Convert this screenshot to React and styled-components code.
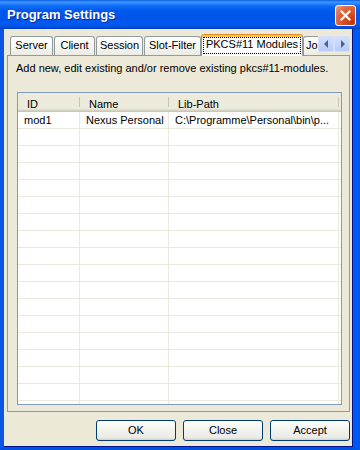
import React from 'react';
import styled, { createGlobalStyle, css } from 'styled-components';

const Global = createGlobalStyle`
  html, body { margin: 0; padding: 0; background: #ece9d8; }
  body { font-family: "Liberation Sans", Arial, sans-serif; font-size: 11px; color: #000; }
  * { box-sizing: border-box; }
`;

const Window = styled.div`
  width: 360px;
  height: 450px;
  display: flex;
  flex-direction: column;
  overflow: hidden;
`;

const TitleBar = styled.div`
  flex: none;
  height: 29px;
  display: flex;
  align-items: center;
  justify-content: space-between;
  padding: 0 4px 0 7px;
  background: linear-gradient(180deg, #0b5ddc 0%, #3d95ff 7%, #2a86ff 12%, #0f6cf6 20%, #0059ee 36%, #0055e9 62%, #005af2 82%, #0052e0 93%, #003cbc 100%);
`;

const Title = styled.div`
  color: #fff;
  font-weight: bold;
  font-size: 13px;
  line-height: 16px;
  margin-top: 1px;
  text-shadow: 1px 1px #0a2a9a;
`;

const CloseButton = styled.div`
  width: 21px;
  height: 21px;
  border: 1px solid #fff;
  border-radius: 3px;
  background: radial-gradient(circle at 85% 85%, #c2350c 0%, #d9552a 45%, #e37150 75%, #f0a58c 100%);
  display: flex;
  align-items: center;
  justify-content: center;
  margin-top: 1px;
`;

const Frame = styled.div`
  flex: 1;
  display: flex;
  flex-direction: column;
  border-left: 4px solid #0a56e6;
  border-right: 7px solid #0058ee;
  border-bottom: 3px solid #0052e2;
  min-height: 0;
`;

const Content = styled.div`
  flex: 1;
  display: flex;
  flex-direction: column;
  background: #ece9d8;
  border-right: 1px solid #00138c;
  border-bottom: 1px solid #00138c;
  padding: 5px 0 4px 0;
  min-height: 0;
`;

const Strip = styled.div`
  flex: none;
  display: flex;
  height: 22px;
  margin: 0 2px -1px 3px;
  padding-left: 3px;
  position: relative;
  z-index: 1;
`;

const TabViewport = styled.div`
  flex: 1;
  min-width: 0;
  display: flex;
  align-items: flex-start;
  overflow: hidden;
`;

const Tab = styled.div`
  flex: none;
  width: ${(p) => p.$w}px;
  margin-left: ${(p) => p.$gap}px;
  border: 1px solid #919b9c;
  border-bottom: none;
  border-radius: 3px 3px 0 0;
  white-space: nowrap;
  text-align: center;
  line-height: 13px;
  ${(p) =>
    p.$sel
      ? css`
          height: 22px;
          margin-top: 0;
          border-top-color: #e68b2c;
          background: #fcfcfe;
          box-shadow: inset 0 2px #ffc73c;
          padding: 2px 1px 0 1px;
        `
      : css`
          height: 19px;
          margin-top: 2px;
          background: linear-gradient(180deg, #ffffff 0%, #f7f7f4 50%, #ecebe5 100%);
          padding: 2px 0 0 0;
        `}
  ${(p) =>
    p.$clipped &&
    css`
      border-right: none;
      border-top-right-radius: 0;
      text-align: left;
      padding-left: 2px;
    `}
`;

const FocusRect = styled.div`
  height: 17px;
  border: 1px dotted #000;
  line-height: 13px;
  padding-top: 0;
`;

const Spinner = styled.div`
  flex: none;
  display: flex;
  margin-top: 2px;
  height: 16px;
`;

const SpinButton = styled.div`
  width: 16px;
  height: 16px;
  display: flex;
  align-items: center;
  justify-content: center;
  background: linear-gradient(180deg, #d3e0fc 0%, #c4d5fb 50%, #b7cbf6 100%);
  border: 1px solid #d2defb;
  border-radius: 2px;
`;

const Panel = styled.div`
  flex: none;
  height: 357px;
  display: flex;
  flex-direction: column;
  margin: 0 2px 0 3px;
  border: 1px solid #919b9c;
  background: #ece9d8;
  padding: 6px 7px 6px 8px;
`;

const Description = styled.div`
  line-height: 13px;
  white-space: nowrap;
  flex: none;
`;

const List = styled.div`
  flex: 1;
  min-height: 0;
  margin: 17px 0 0 1px;
  border: 1px solid #7f9db9;
  background: #fff;
  display: flex;
  flex-direction: column;
  overflow: hidden;
`;

const columns = '62px 89px 170px 1fr';

const HeaderRow = styled.div`
  flex: none;
  display: grid;
  grid-template-columns: ${columns};
  height: 19px;
  background: #ebeadb;
  box-shadow: inset 0 -1px #cbc7b8, inset 0 -2px #d6d2c2, inset 0 -3px #e2decd;
`;

const HeaderCell = styled.div`
  position: relative;
  padding: 5px 0 0 9px;
  line-height: 13px;
  white-space: nowrap;
  overflow: hidden;
  ${(p) =>
    p.$sep &&
    css`
      &::after {
        content: '';
        position: absolute;
        right: 0;
        top: 4px;
        bottom: 5px;
        width: 1px;
        background: #c7c5b2;
      }
    `}
`;

const Row = styled.div`
  flex: none;
  display: grid;
  grid-template-columns: ${columns};
  height: 17px;
  border-bottom: 1px solid #ebe9dd;
`;

const Cell = styled.div`
  padding: 2px 0 0 6px;
  line-height: 13px;
  white-space: nowrap;
  overflow: hidden;
  border-right: ${(p) => (p.$last ? 'none' : '1px solid #ebe9dd')};
`;

const ButtonRow = styled.div`
  flex: none;
  display: flex;
  justify-content: flex-end;
  gap: 7px;
  margin: 8px 2px 0 0;
`;

const Button = styled.button`
  width: 80px;
  height: 21px;
  padding: 0;
  border: 1px solid #003c74;
  border-radius: 3px;
  background: linear-gradient(180deg, #ffffff 0%, #f4f4f0 40%, #ecebe6 86%, #d6d0c5 100%);
  font-family: "Liberation Sans", Arial, sans-serif;
  font-size: 11px;
  color: #000;
  line-height: 13px;
`;

const tabs = [
  { label: 'Server', w: 43, gap: 0 },
  { label: 'Client', w: 41, gap: 1 },
  { label: 'Session', w: 47, gap: 1 },
  { label: 'Slot-Filter', w: 57, gap: 1 },
  { label: 'PKCS#11 Modules', w: 102, gap: 0, sel: true },
  { label: 'Jo', w: 15, gap: 0, clipped: true },
];

const rows = [['mod1', 'Nexus Personal', 'C:\\Programme\\Personal\\bin\\p...']];
const emptyRows = Array.from({ length: 18 }, () => ['', '', '']);

function Arrow({ dir }) {
  return (
    <svg width="5" height="8" viewBox="0 0 5 8">
      {dir === 'left' ? (
        <polygon points="4,0 4,8 0,4" fill="#4d6185" />
      ) : (
        <polygon points="1,0 1,8 5,4" fill="#4d6185" />
      )}
    </svg>
  );
}

export default function App() {
  return (
    <>
      <Global />
      <Window>
        <TitleBar>
          <Title>Program Settings</Title>
          <CloseButton>
            <svg width="13" height="13" viewBox="0 0 13 13">
              <path d="M2.5 2.5 L10.5 10.5 M10.5 2.5 L2.5 10.5" stroke="#fff" strokeWidth="2.2" strokeLinecap="square" />
            </svg>
          </CloseButton>
        </TitleBar>
        <Frame>
          <Content>
            <Strip>
              <TabViewport>
                {tabs.map((t) => (
                  <Tab key={t.label} $w={t.w} $gap={t.gap} $sel={t.sel} $clipped={t.clipped}>
                    {t.sel ? <FocusRect>{t.label}</FocusRect> : t.label}
                  </Tab>
                ))}
              </TabViewport>
              <Spinner>
                <SpinButton>
                  <Arrow dir="left" />
                </SpinButton>
                <SpinButton>
                  <Arrow dir="right" />
                </SpinButton>
              </Spinner>
            </Strip>
            <Panel>
              <Description>Add new, edit existing and/or remove existing pkcs#11-modules.</Description>
              <List>
                <HeaderRow>
                  <HeaderCell $sep>ID</HeaderCell>
                  <HeaderCell $sep>Name</HeaderCell>
                  <HeaderCell $sep>Lib-Path</HeaderCell>
                  <HeaderCell />
                </HeaderRow>
                {[...rows, ...emptyRows].map((r, i) => (
                  <Row key={i}>
                    <Cell>{r[0]}</Cell>
                    <Cell>{r[1]}</Cell>
                    <Cell>{r[2]}</Cell>
                    <Cell $last />
                  </Row>
                ))}
              </List>
            </Panel>
            <ButtonRow>
              <Button>OK</Button>
              <Button>Close</Button>
              <Button>Accept</Button>
            </ButtonRow>
          </Content>
        </Frame>
      </Window>
    </>
  );
}
